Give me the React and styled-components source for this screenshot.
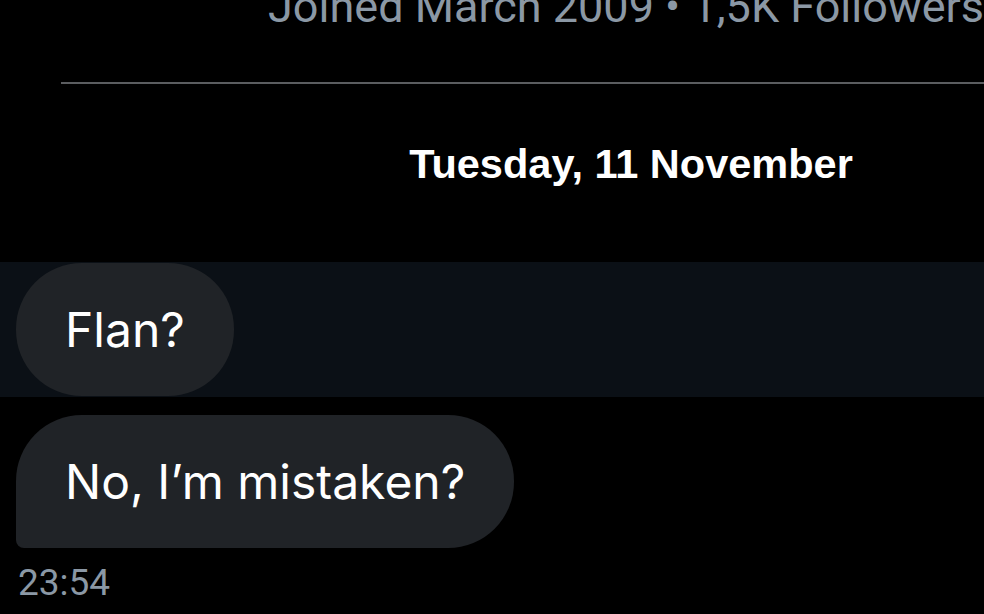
import styled, { createGlobalStyle } from 'styled-components';

const GlobalStyle = createGlobalStyle`
  html, body {
    margin: 0;
    padding: 0;
    background: #000;
  }
  body {
    font-family: Inter, 'Noto Sans', sans-serif;
    overflow: hidden;
  }
`;

const Screen = styled.div`
  width: 984px;
  height: 614px;
  background: #000;
  overflow: hidden;
  display: flex;
  flex-direction: column;
`;

const Meta = styled.div`
  margin-top: -16px;
  padding-left: 268px;
  font-family: Roboto, 'Liberation Sans', sans-serif;
  font-size: 45px;
  line-height: 46px;
  color: #8b98a5;
  white-space: nowrap;
`;

const Divider = styled.hr`
  margin: 52px 0 0 61px;
  border: 0;
  height: 2px;
  background: #5b5d60;
`;

const DateLabel = styled.div`
  padding-left: 278px;
  margin-top: 56px;
  text-align: center;
  font-family: 'Liberation Sans', Arial, sans-serif;
  font-weight: 700;
  font-size: 41.5px;
  line-height: 48px;
  color: #fff;
`;

const Row = styled.div`
  margin-top: ${p => p.$top || 0}px;
  padding: 1px 16px;
  display: flex;
  background: ${p => (p.$highlight ? '#0b1016' : 'transparent')};
`;

const Bubble = styled.div`
  height: 133px;
  box-sizing: border-box;
  padding: 0 49px;
  display: flex;
  align-items: center;
  background: #202327;
  border-radius: ${p => (p.$tail ? '66px 66px 66px 8px' : '66px')};
  color: #fff;
  font-size: 48px;
  white-space: nowrap;
`;

const Time = styled.div`
  padding-left: 18px;
  margin-top: 14px;
  font-family: Roboto, 'Liberation Sans', sans-serif;
  font-size: 37px;
  line-height: 40px;
  color: #8b98a5;
`;

export default function App() {
  return (
    <Screen>
      <GlobalStyle />
      <Meta>Joined March 2009 • 1,5K Followers</Meta>
      <Divider />
      <DateLabel>Tuesday, 11 November</DateLabel>
      <Row $highlight $top={74}>
        <Bubble>Flan?</Bubble>
      </Row>
      <Row $top={17}>
        <Bubble $tail>No, I’m mistaken?</Bubble>
      </Row>
      <Time>23:54</Time>
    </Screen>
  );
}
